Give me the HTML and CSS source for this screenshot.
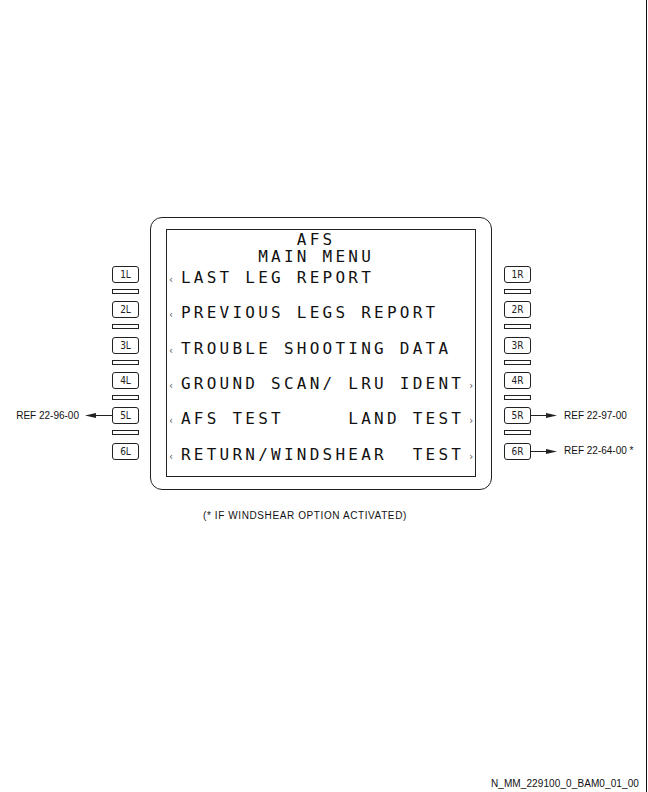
FILE: index.html
```html
<!DOCTYPE html>
<html lang="en">
<head>
    <meta charset="UTF-8">
    <title>AFS Main Menu</title>
    <link rel="stylesheet" href="styles.css">
</head>
<body>
    <div class="sheet">
        <div class="panel">
            <!-- left line select keys -->
            <div class="keys keys-left">
                <div class="slot"><div class="key-row"><div class="key">1L</div></div><div class="bar"></div></div>
                <div class="slot"><div class="key-row"><div class="key">2L</div></div><div class="bar"></div></div>
                <div class="slot"><div class="key-row"><div class="key">3L</div></div><div class="bar"></div></div>
                <div class="slot"><div class="key-row"><div class="key">4L</div></div><div class="bar"></div></div>
                <div class="slot">
                    <div class="key-row">
                        <span class="ref ref-left">REF 22-96-00</span>
                        <svg class="arrow" width="27" height="7" viewBox="0 0 27 7"><line x1="9" y1="3.5" x2="27" y2="3.5" stroke="#222" stroke-width="1"/><polygon points="0,3.5 11,1 11,6" fill="#222"/></svg>
                        <div class="key">5L</div>
                    </div>
                    <div class="bar"></div>
                </div>
                <div class="slot"><div class="key-row"><div class="key">6L</div></div></div>
            </div>

            <!-- display unit -->
            <div class="bezel">
                <div class="screen">
                    <div class="title">         AFS
      MAIN MENU</div>
                    <div class="menu">
                        <div class="row"><span class="chev">‹</span><span class="txt">LAST LEG REPORT</span></div>
                        <div class="row"><span class="chev">‹</span><span class="txt">PREVIOUS LEGS REPORT</span></div>
                        <div class="row"><span class="chev">‹</span><span class="txt">TROUBLE SHOOTING DATA</span></div>
                        <div class="row"><span class="chev">‹</span><span class="txt">GROUND SCAN/ LRU IDENT</span><span class="chev-r">›</span></div>
                        <div class="row"><span class="chev">‹</span><span class="txt">AFS TEST     LAND TEST</span><span class="chev-r">›</span></div>
                        <div class="row"><span class="chev">‹</span><span class="txt">RETURN/WINDSHEAR  TEST</span><span class="chev-r">›</span></div>
                    </div>
                </div>
            </div>

            <!-- right line select keys -->
            <div class="keys keys-right">
                <div class="slot"><div class="key-row"><div class="key">1R</div></div><div class="bar"></div></div>
                <div class="slot"><div class="key-row"><div class="key">2R</div></div><div class="bar"></div></div>
                <div class="slot"><div class="key-row"><div class="key">3R</div></div><div class="bar"></div></div>
                <div class="slot"><div class="key-row"><div class="key">4R</div></div><div class="bar"></div></div>
                <div class="slot">
                    <div class="key-row">
                        <div class="key">5R</div>
                        <svg class="arrow" width="26" height="7" viewBox="0 0 26 7"><line x1="0" y1="3.5" x2="18" y2="3.5" stroke="#222" stroke-width="1"/><polygon points="26,3.5 15,1 15,6" fill="#222"/></svg>
                        <span class="ref ref-right">REF 22-97-00</span>
                    </div>
                    <div class="bar"></div>
                </div>
                <div class="slot">
                    <div class="key-row">
                        <div class="key">6R</div>
                        <svg class="arrow" width="26" height="7" viewBox="0 0 26 7"><line x1="0" y1="3.5" x2="18" y2="3.5" stroke="#222" stroke-width="1"/><polygon points="26,3.5 15,1 15,6" fill="#222"/></svg>
                        <span class="ref ref-right">REF 22-64-00 *</span>
                    </div>
                </div>
            </div>
        </div>

        <p class="note">(* IF WINDSHEAR OPTION ACTIVATED)</p>

        <p class="doc-id">N_MM_229100_0_BAM0_01_00</p>
    </div>
</body>
</html>
```

FILE: styles.css
```css
* { margin: 0; padding: 0; box-sizing: border-box; }

body {
    background: white;
    font-family: "Liberation Sans", Arial, sans-serif;
    color: #111;
}

.sheet {
    width: 647px;
    height: 792px;
    border-right: 1px solid #111;
    display: flex;
    flex-direction: column;
}

.panel {
    display: flex;
    align-items: flex-start;
    margin-top: 217px;
}

/* line select keys */
.keys { padding-top: 49px; }
.keys-left { width: 139px; }
.keys-right { margin-left: 12px; }

.slot { height: 35.33px; }

.key-row {
    display: flex;
    align-items: center;
    height: 17px;
}

.keys-left .key-row { justify-content: flex-end; }

.key {
    width: 27px;
    height: 17px;
    border: 1px solid #222;
    border-radius: 3px;
    display: flex;
    align-items: center;
    justify-content: center;
    font-family: "DejaVu Sans Condensed", "Liberation Sans", sans-serif;
    font-size: 10px;
    color: #222;
}

.bar {
    width: 27px;
    height: 5px;
    border: 1px solid #222;
    margin-top: 6px;
}

.keys-left .bar { margin-left: auto; }

.arrow { display: block; flex: none; }

.ref {
    font-size: 10px;
    white-space: pre;
    line-height: 12px;
}

.ref-left { margin-right: 6px; }
.ref-right { margin-left: 7px; }

/* display unit */
.bezel {
    margin-left: 11px;
    width: 342px;
    height: 273px;
    border: 1px solid #222;
    border-radius: 12px;
    padding: 11px 15px 0 15px;
}

.screen {
    width: 310px;
    height: 248px;
    border: 1px solid #222;
    padding-top: 1px;
    font-family: "DejaVu Sans Mono", "Liberation Mono", monospace;
    font-size: 16px;
    letter-spacing: 3.24px;
    color: #111;
}

.title {
    white-space: pre;
    line-height: 17px;
    height: 34px;
    padding-left: 14px;
}

.menu {
    margin-top: 4px;
    display: flex;
    flex-direction: column;
    gap: 18.33px;
}

.row {
    display: flex;
    align-items: baseline;
    height: 17px;
    line-height: 17px;
}

.chev, .chev-r {
    font-family: "DejaVu Sans", sans-serif;
    font-size: 10px;
    letter-spacing: 0;
    color: #555;
}

.chev { width: 14px; padding-left: 2px; }
.chev-r { margin-left: 5px; }

.txt { white-space: pre; }

.note {
    margin-top: 20px;
    padding-left: 203px;
    font-size: 10px;
    line-height: 12px;
    letter-spacing: 0.6px;
}

.doc-id {
    margin-top: auto;
    padding: 0 7px 2px 0;
    text-align: right;
    font-size: 10px;
    line-height: 12px;
    letter-spacing: 0.1px;
}
```
